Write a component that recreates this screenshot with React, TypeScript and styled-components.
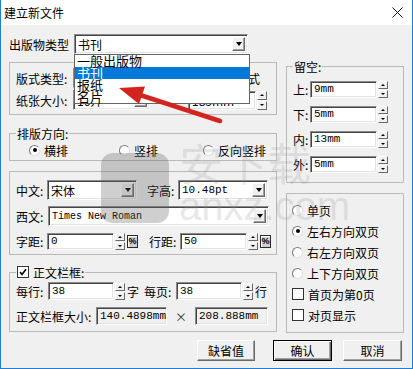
import React from 'react';
import styled, { createGlobalStyle } from 'styled-components';

const GlobalStyle = createGlobalStyle`
  * { box-sizing: border-box; }
  body {
    margin: 0;
    background: #fff;
    color: #000;
    font-family: "Noto Sans CJK SC", "Noto Sans", sans-serif;
    font-size: 12px;
  }
`;

const Window = styled.div`
  position: relative;
  width: 413px;
  height: 369px;
  display: flex;
  flex-direction: column;
  border: 1px solid #1c7ed6;
  border-top: none;
  overflow: hidden;
`;

const TitleBar = styled.div`
  height: 25px;
  flex-shrink: 0;
  display: flex;
  align-items: center;
  justify-content: space-between;
  padding: 0 9px 0 3px;
  background: #fff;
  font-size: 12px;
`;

const Body = styled.div`
  flex: 1;
  background: #f0f0f0;
  padding: 9px 8px 0 8px;
  line-height: 13px;
`;

const Row = styled.div<{ $h?: number }>`
  display: flex;
  align-items: center;
  height: ${p => p.$h ?? 20}px;
  flex-shrink: 0;
`;

const Label = styled.span<{ $w?: number; $ml?: number }>`
  flex-shrink: 0;
  white-space: nowrap;
  width: ${p => (p.$w ? `${p.$w}px` : 'auto')};
  margin-left: ${p => p.$ml ?? 0}px;
`;

const Columns = styled.div`
  display: flex;
  gap: 9px;
  margin-top: 6px;
`;

const LeftCol = styled.div`
  width: 268px;
  padding-top: 2px;
  display: flex;
  flex-direction: column;
`;

const RightCol = styled.div`
  width: 118px;
  display: flex;
  flex-direction: column;
`;

const Group = styled.fieldset<{ $pad: string; $mt?: number; $gap?: number }>`
  margin: ${p => p.$mt ?? 0}px 0 0 0;
  min-width: 0;
  border: 1px solid #b9b9b9;
  padding: ${p => p.$pad};
  display: flex;
  flex-direction: column;
  gap: ${p => p.$gap ?? 0}px;
`;

const Legend = styled.legend<{ $h?: number }>`
  padding: 0 1px;
  height: ${p => p.$h ?? 13}px;
  line-height: 13px;
  display: flex;
  align-items: center;
  gap: 4px;
`;

const Sunken = styled.div<{ $w?: number; $h?: number; $ro?: boolean }>`
  position: relative;
  flex-shrink: 0;
  width: ${p => (p.$w ? `${p.$w}px` : 'auto')};
  height: ${p => p.$h ?? 20}px;
  display: flex;
  align-items: center;
  background: ${p => (p.$ro ? '#f0f0f0' : '#fff')};
  border: 1px solid;
  border-color: #8a8a8a #fdfdfd #fdfdfd #8a8a8a;
  box-shadow: inset 1px 1px 0 #454545, inset -1px -1px 0 #e3e3e3;
`;

const FieldText = styled.span<{ $mono?: boolean; $fs?: number }>`
  flex: 1;
  padding-left: 3px;
  overflow: hidden;
  white-space: nowrap;
  font-family: ${p => (p.$mono ? '"Liberation Mono", monospace' : '"Noto Sans CJK SC", sans-serif')};
  font-size: ${p => p.$fs ?? 12}px;
`;

const DropButton = styled.div`
  width: 13px;
  height: 14px;
  margin-right: 2px;
  flex-shrink: 0;
  display: flex;
  align-items: center;
  justify-content: center;
  background: #f0f0f0;
  border: 1px solid;
  border-color: #fff #696969 #696969 #fff;
  box-shadow: inset -1px -1px 0 #a0a0a0;
  &::after {
    content: '';
    border-left: 3.5px solid transparent;
    border-right: 3.5px solid transparent;
    border-top: 4px solid #000;
  }
`;

const Spin = styled.div<{ $h: number }>`
  width: 10px;
  height: ${p => p.$h}px;
  margin-left: 1px;
  flex-shrink: 0;
  display: flex;
  flex-direction: column;
  gap: 1px;
`;

const SpinHalf = styled.div<{ $up?: boolean }>`
  flex: 1;
  display: flex;
  align-items: center;
  justify-content: center;
  background: #f0f0f0;
  border: 1px solid;
  border-color: #fff #696969 #696969 #fff;
  &::after {
    content: '';
    border-left: 2px solid transparent;
    border-right: 2px solid transparent;
    ${p => (p.$up ? 'border-bottom: 2px solid #000;' : 'border-top: 2px solid #000;')}
  }
`;

const Percent = styled.div`
  width: 11px;
  height: 13px;
  margin-left: 2px;
  flex-shrink: 0;
  display: flex;
  align-items: center;
  justify-content: center;
  border: 1px solid #2a2a2a;
  background: #cfcfcf;
  box-shadow: inset 1px 1px 0 #fff;
  font-family: "Liberation Sans", sans-serif;
  font-size: 9px;
  font-weight: bold;
`;

const DropList = styled.div`
  position: absolute;
  top: 19px;
  left: -1px;
  width: 176px;
  z-index: 5;
  background: #fff;
  border: 1px solid #646464;
`;

const DropItem = styled.div<{ $active?: boolean }>`
  height: 12px;
  padding-left: 2px;
  font-size: 13px;
  line-height: 12px;
  background: ${p => (p.$active ? '#0078d7' : 'transparent')};
  color: ${p => (p.$active ? '#fff' : '#000')};
`;

const Option = styled.div<{ $w?: number }>`
  display: flex;
  align-items: center;
  gap: 4px;
  height: 14px;
  flex-shrink: 0;
  width: ${p => (p.$w ? `${p.$w}px` : 'auto')};
`;

const RadioDot = styled.span<{ $on?: boolean }>`
  width: 11px;
  height: 11px;
  flex-shrink: 0;
  border-radius: 50%;
  background: #fff;
  border: 1px solid;
  border-color: #7a7a7a #e0e0e0 #e0e0e0 #7a7a7a;
  display: flex;
  align-items: center;
  justify-content: center;
  &::after {
    content: '';
    width: 4px;
    height: 4px;
    border-radius: 50%;
    background: ${p => (p.$on ? '#000' : 'transparent')};
  }
`;

const CheckBox = styled.span`
  width: 12px;
  height: 12px;
  flex-shrink: 0;
  background: #fff;
  border: 1px solid #333;
  display: flex;
  align-items: center;
  justify-content: center;
`;

const Times = styled.span`
  width: 28px;
  text-align: center;
  flex-shrink: 0;
  font-size: 12px;
  color: #333;
`;

const ButtonRow = styled.div`
  display: flex;
  justify-content: flex-end;
  margin-top: 7px;
  padding-right: 2px;
`;

const Button = styled.div<{ $w: number; $ml?: number; $default?: boolean }>`
  width: ${p => p.$w}px;
  height: 21px;
  margin-left: ${p => p.$ml ?? 0}px;
  display: flex;
  align-items: center;
  justify-content: center;
  background: #f0f0f0;
  font-size: 12px;
  border: 1px solid;
  border-color: ${p => (p.$default ? '#000' : '#fff #696969 #696969 #fff')};
  box-shadow: ${p =>
    p.$default
      ? 'inset 1px 1px 0 #fff, inset -1px -1px 0 #696969, inset -2px -2px 0 #a0a0a0'
      : 'inset -1px -1px 0 #a0a0a0'};
`;

const Overlay = styled.svg`
  position: absolute;
  left: 0;
  top: 0;
  z-index: 10;
  pointer-events: none;
`;

const Watermark = styled.div`
  position: absolute;
  left: 100px;
  top: 140px;
  z-index: 4;
  display: flex;
  gap: 10px;
  pointer-events: none;
`;

const Shield = styled.div`
  width: 68px;
  height: 70px;
  margin-top: 13px;
  border-radius: 12px;
  background: rgba(95, 95, 95, 0.3);
`;

const MarkText = styled.div`
  display: flex;
  flex-direction: column;
  color: rgba(150, 150, 150, 0.22);
  line-height: 1;
  span:first-child { font-size: 44px; }
  span:last-child { font-family: "Liberation Sans", sans-serif; font-size: 40px; margin-top: 2px; }
`;

type FieldProps = { w?: number; h?: number; text?: string; mono?: boolean; fs?: number; ro?: boolean };

const Edit: React.FC<FieldProps> = ({ w, h = 17, text, mono, fs, ro }) => (
  <Sunken $w={w} $h={h} $ro={ro}>
    <FieldText $mono={mono} $fs={fs}>{text}</FieldText>
  </Sunken>
);

const Combo: React.FC<FieldProps & { children?: React.ReactNode; grow?: boolean }> = ({ w, h = 20, text, mono, fs, children, grow }) => (
  <Sunken $w={w} $h={h} style={grow ? { flex: 1 } : undefined}>
    <FieldText $mono={mono} $fs={fs}>{text}</FieldText>
    <DropButton />
    {children}
  </Sunken>
);

const Spinner: React.FC<{ h: number }> = ({ h }) => (
  <Spin $h={h}>
    <SpinHalf $up />
    <SpinHalf />
  </Spin>
);

const Check = () => (
  <CheckBox>
    <svg width="8" height="8" viewBox="0 0 8 8">
      <path d="M1 4 L3 6.5 L7 1.2" fill="none" stroke="#000" strokeWidth="1.6" />
    </svg>
  </CheckBox>
);

const margins = [
  { label: '上:', value: '9mm' },
  { label: '下:', value: '5mm' },
  { label: '内:', value: '13mm' },
  { label: '外:', value: '5mm' },
];

const pageOptions = [
  { label: '单页', kind: 'radio', on: false },
  { label: '左右方向双页', kind: 'radio', on: true },
  { label: '右左方向双页', kind: 'radio', on: false },
  { label: '上下方向双页', kind: 'radio', on: false },
  { label: '首页为第0页', kind: 'check', on: false },
  { label: '对页显示', kind: 'check', on: false },
];

export default function App() {
  return (
    <>
      <GlobalStyle />
      <Window>
        <TitleBar>
          <span>建立新文件</span>
          <svg width="11" height="11" viewBox="0 0 11 11">
            <path d="M0.5 0.5 L10.5 10.5 M10.5 0.5 L0.5 10.5" stroke="#111" strokeWidth="1" />
          </svg>
        </TitleBar>
        <Body>
          <Row>
            <Label $w={65}>出版物类型</Label>
            <Combo w={174} text="书刊">
              <DropList>
                <DropItem>一般出版物</DropItem>
                <DropItem $active>书刊</DropItem>
                <DropItem>报纸</DropItem>
                <DropItem>名片</DropItem>
              </DropList>
            </Combo>
          </Row>

          <Columns>
            <LeftCol>
              <Group $pad="5px 6px 4px 6px" $gap={2}>
                <Row>
                  <Label $w={57}>版式类型:</Label>
                  <Combo w={77} text="标准" />
                  <Label $ml={62}>版心格式</Label>
                </Row>
                <Row>
                  <Label $w={57}>纸张大小:</Label>
                  <Combo w={77} text="16开" />
                  <Label $w={38} />
                  <Edit w={68} h={19} text="185mm" />
                  <Spinner h={19} />
                </Row>
              </Group>

              <Group $pad="3px 6px 3px 6px" $mt={12}>
                <Legend>排版方向:</Legend>
                <Row $h={14} style={{ paddingLeft: 13 }}>
                  <Option $w={90}><RadioDot $on />横排</Option>
                  <Option $w={84}><RadioDot />竖排</Option>
                  <Option><RadioDot />反向竖排</Option>
                </Row>
              </Group>

              <Group $pad="8px 7px 4px 6px" $mt={10} $gap={6}>
                <Row>
                  <Label $w={31}>中文:</Label>
                  <Combo w={90} text="宋体" />
                  <Label $w={31} $ml={10}>字高:</Label>
                  <Combo w={90} text="10.48pt" mono fs={11} />
                </Row>
                <Row>
                  <Label $w={32}>西文:</Label>
                  <Combo grow text="Times New Roman" mono fs={10} />
                </Row>
                <Row $h={18}>
                  <Label $w={31}>字距:</Label>
                  <Edit w={67} h={17} text="0" mono fs={11} />
                  <Spinner h={17} />
                  <Percent>%</Percent>
                  <Label $w={31} $ml={11}>行距:</Label>
                  <Edit w={67} h={17} text="50" mono fs={11} />
                  <Spinner h={17} />
                  <Percent>%</Percent>
                </Row>
              </Group>

              <Group $pad="3px 6px 6px 6px" $mt={10} $gap={7}>
                <Legend $h={14}><Check />正文栏框:</Legend>
                <Row $h={18}>
                  <Label $w={32}>每行:</Label>
                  <Edit w={66} h={18} text="38" mono fs={11} />
                  <Spinner h={17} />
                  <Label $w={19} style={{ paddingLeft: 2 }}>字</Label>
                  <Label $w={32}>每页:</Label>
                  <Edit w={66} h={18} text="38" mono fs={11} />
                  <Spinner h={17} />
                  <Label style={{ paddingLeft: 2 }}>行</Label>
                </Row>
                <Row $h={18}>
                  <Label $w={80}>正文栏框大小:</Label>
                  <Edit w={71} h={18} text="140.4898mm" mono fs={11} ro />
                  <Times>×</Times>
                  <Edit w={73} h={18} text="208.888mm" mono fs={11} ro />
                </Row>
              </Group>
            </LeftCol>

            <RightCol>
              <Group $pad="8px 6px 9px 6px" $gap={8}>
                <Legend>留空:</Legend>
                {margins.map(m => (
                  <Row key={m.label} $h={17}>
                    <Label $w={17}>{m.label}</Label>
                    <Edit w={67} h={17} text={m.value} mono fs={11} />
                    <Spinner h={17} />
                  </Row>
                ))}
              </Group>

              <Group $pad="9px 6px 10px 5px" $mt={10} $gap={7}>
                {pageOptions.map(o => (
                  <Option key={o.label}>
                    {o.kind === 'radio' ? <RadioDot $on={o.on} /> : <CheckBox />}
                    {o.label}
                  </Option>
                ))}
              </Group>
            </RightCol>
          </Columns>

          <ButtonRow>
            <Button $w={58}>缺省值</Button>
            <Button $w={59} $ml={18} $default>确认</Button>
            <Button $w={59} $ml={11}>取消</Button>
          </ButtonRow>
        </Body>

        <Watermark>
          <Shield />
          <MarkText>
            <span>安下载</span>
            <span>anxz.com</span>
          </MarkText>
        </Watermark>

        <Overlay width="413" height="369" viewBox="0 0 413 369">
          <line x1="136" y1="94" x2="219" y2="121" stroke="#d3241e" strokeWidth="4.5" strokeLinecap="round" />
          <polygon points="118,88 144,86.6 138,104" fill="#d3241e" />
        </Overlay>
      </Window>
    </>
  );
}
